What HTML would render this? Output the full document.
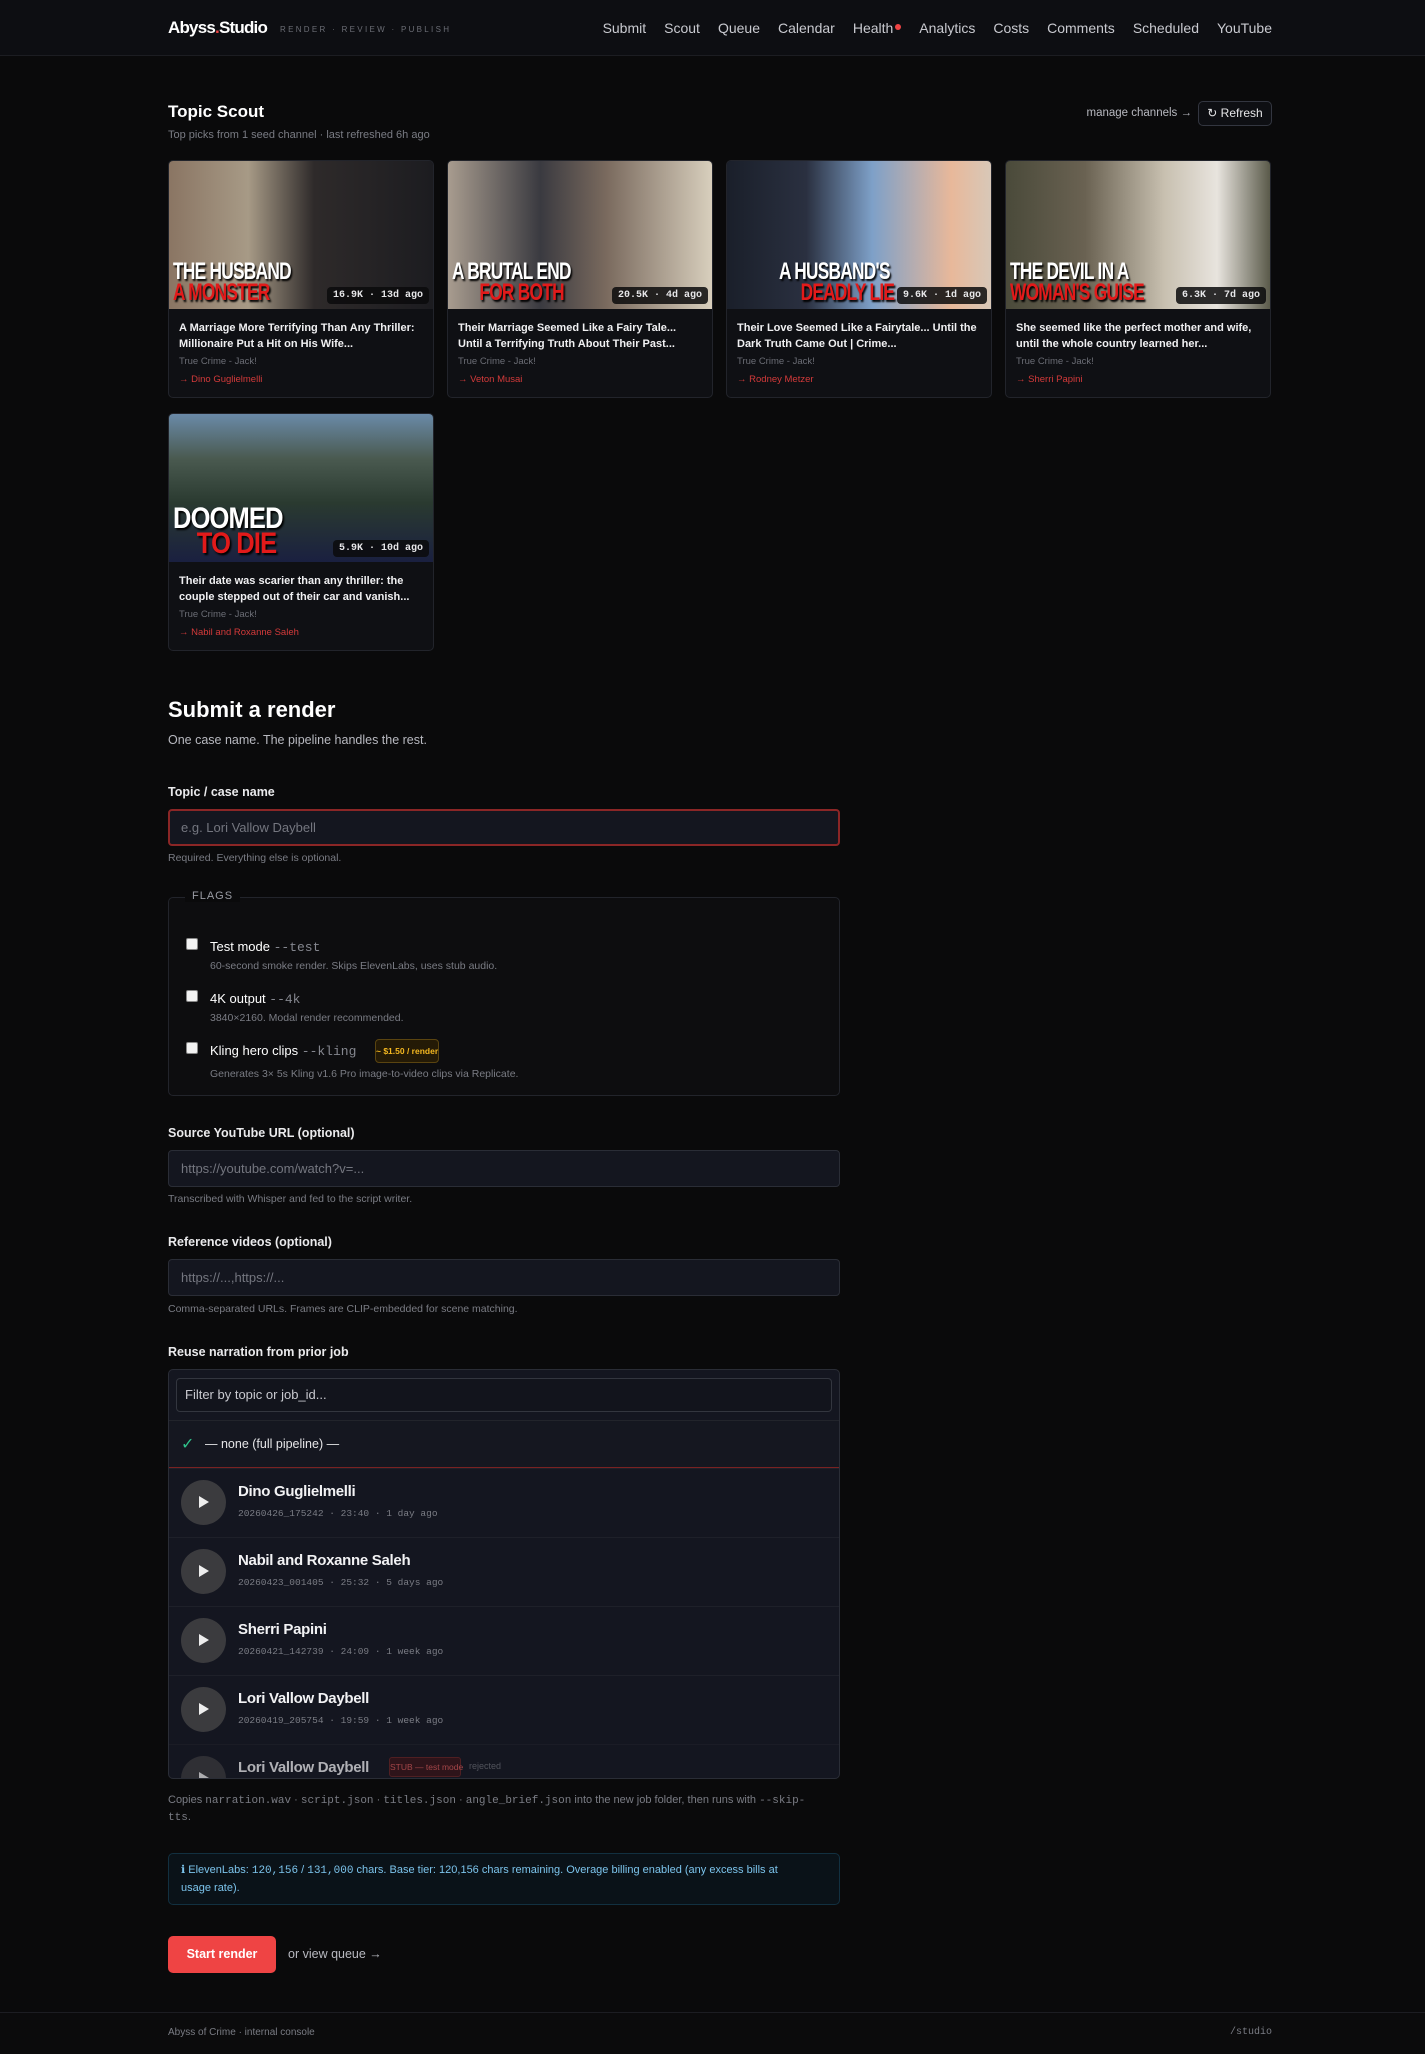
<!DOCTYPE html>
<html><head><meta charset="utf-8"><style>
*{box-sizing:border-box;margin:0;padding:0}
body{width:1425px;height:2054px;background:#0a0a0b;color:#e6e6e8;font-family:"Liberation Sans",sans-serif;position:relative;overflow:hidden}
.nav{height:56px;background:#0d0e12;border-bottom:1px solid #1c1d22;position:relative}
.logo{position:absolute;left:168px;top:18px;font-size:17px;font-weight:bold;color:#fff;letter-spacing:-0.8px}
.logo span{color:#ef4444}
.tag{position:absolute;left:280px;top:25px;font-size:8px;letter-spacing:2.3px;color:#6b6d75}
.links{position:absolute;right:153px;top:20px;font-size:14px;color:#c9cad0;white-space:nowrap}
.links a{margin-left:18px;color:#c9cad0;text-decoration:none}
.dot{display:inline-block;width:6px;height:6px;border-radius:3px;background:#ef4444;vertical-align:top;margin-top:4px;margin-left:2px}
.h2{position:absolute;left:168px;top:102px;font-size:17px;font-weight:bold;color:#fff}
.sub{position:absolute;left:168px;top:129px;font-size:11px;color:#7a7c84}
.mc{position:absolute;right:233px;top:107px;font-size:11.5px;color:#b8b9c0}
.ref{position:absolute;left:1198px;top:101px;width:74px;height:25px;border:1px solid #333640;border-radius:5px;background:#0e0f13;font-size:12px;color:#e6e6e8;text-align:center;line-height:23px}
.card{position:absolute;width:266px;height:238px;background:#0f1014;border:1px solid #22242b;border-radius:5px;overflow:hidden}
.thumb{height:148px;position:relative}
.ov{position:absolute;left:4px;bottom:6px;font-family:"Liberation Sans Narrow","Liberation Sans",sans-serif;font-weight:bold;font-size:24px;line-height:21px;color:#fff;text-shadow:2px 2px 2px #000;letter-spacing:-1px;transform:scaleX(.72);transform-origin:left bottom;white-space:nowrap}
.ov b{color:#e21a1a;display:block}
.st{position:absolute;right:4px;bottom:5px;background:rgba(10,10,12,.85);border-radius:4px;font-family:"Liberation Mono",monospace;font-size:10px;font-weight:bold;color:#e6e6e8;padding:3px 6px}
.ct{padding:11px 10px 0;font-size:11px;font-weight:bold;line-height:16px;color:#f0f0f2;height:43px;overflow:hidden}
.cc{padding:4px 10px 0;font-size:9.5px;color:#6b6d75}
.ca{padding:7px 10px 0;font-size:9.5px;color:#d33a3a}
.abs{position:absolute}
.lbl{position:absolute;left:168px;font-size:12.5px;font-weight:bold;color:#eaeaec}
.inp{position:absolute;left:168px;width:672px;height:37px;background:#14161f;border:1px solid #2a2d36;border-radius:4px;font-size:13px;color:#74767f;padding-left:12px;line-height:35px}
.help{position:absolute;left:168px;font-size:10.5px;color:#7a7c84}
.mono{font-family:"Liberation Mono",monospace}
.fs{position:absolute;left:168px;top:897px;width:672px;height:199px;border:1px solid #22242b;border-radius:5px;background:#0d0d0f}
.fl{position:absolute;left:16px;top:-8px;background:#0a0a0b;padding:0 7px;font-size:11px;letter-spacing:1px;color:#9a9ca4}
.cb{position:absolute;left:17px;width:12px;height:12px;background:#f2f2f2;border-radius:2px;border:1px solid #888}
.ft{position:absolute;left:41px;font-size:13px;color:#fff;white-space:nowrap}
.ft .mono{color:#85878f;font-size:13px}
.fd{position:absolute;left:41px;font-size:10.5px;color:#7a7c84}
.list{position:absolute;left:168px;top:1369px;width:672px;height:410px;background:#141620;border:1px solid #2a2d36;border-radius:5px;overflow:hidden}
.row{position:absolute;left:0;width:672px;height:68px;border-top:1px solid #1e2029}
.play{position:absolute;left:12px;top:11px;width:45px;height:45px;border-radius:50%;background:#3b3b3e}
.play:after{content:"";position:absolute;left:18px;top:16px;border-left:10px solid #eee;border-top:6px solid transparent;border-bottom:6px solid transparent}
.rn{position:absolute;left:69px;top:14px;font-size:15px;font-weight:bold;color:#f2f2f4;letter-spacing:-0.3px}
.rm{position:absolute;left:69px;top:39px;font-family:"Liberation Mono",monospace;font-size:9.5px;color:#7a7c84}
</style></head><body>
<div class="nav">
<div class="logo">Abyss<span>.</span>Studio</div>
<div class="tag">RENDER · REVIEW · PUBLISH</div>
<div class="links"><a>Submit</a><a>Scout</a><a>Queue</a><a>Calendar</a><a>Health<span class="dot"></span></a><a>Analytics</a><a>Costs</a><a>Comments</a><a>Scheduled</a><a>YouTube</a></div>
</div>
<div class="h2">Topic Scout</div>
<div class="sub">Top picks from 1 seed channel · last refreshed 6h ago</div>
<div class="mc">manage channels →</div>
<div class="ref">↻ Refresh</div>

<div class="card" style="left:168px;top:160px"><div class="thumb" style="background:linear-gradient(90deg,#8a7563 0%,#a79a86 30%,#2e2a2a 55%,#1c1c20 100%)"><div class="ov">THE HUSBAND<b>A MONSTER</b></div><div class="st">16.9K · 13d ago</div></div><div class="ct">A Marriage More Terrifying Than Any Thriller: Millionaire Put a Hit on His Wife...</div><div class="cc">True Crime - Jack!</div><div class="ca">→ Dino Guglielmelli</div></div>
<div class="card" style="left:447px;top:160px"><div class="thumb" style="background:linear-gradient(90deg,#a89c8f 0%,#3a3a40 35%,#7a6a5e 60%,#d8cfbd 100%)"><div class="ov">A BRUTAL END<b style="padding-left:38px">FOR BOTH</b></div><div class="st">20.5K · 4d ago</div></div><div class="ct">Their Marriage Seemed Like a Fairy Tale... Until a Terrifying Truth About Their Past...</div><div class="cc">True Crime - Jack!</div><div class="ca">→ Veton Musai</div></div>
<div class="card" style="left:726px;top:160px"><div class="thumb" style="background:linear-gradient(90deg,#1a1f2a 0%,#2a3040 30%,#7ea0c8 55%,#e8b89a 85%,#d8c8b8 100%)"><div class="ov" style="left:52px">A HUSBAND'S<b style="padding-left:30px">DEADLY LIE</b></div><div class="st">9.6K · 1d ago</div></div><div class="ct">Their Love Seemed Like a Fairytale... Until the Dark Truth Came Out | Crime...</div><div class="cc">True Crime - Jack!</div><div class="ca">→ Rodney Metzer</div></div>
<div class="card" style="left:1005px;top:160px"><div class="thumb" style="background:linear-gradient(90deg,#4a4a3a 0%,#6a6252 30%,#c8c0b0 60%,#e8e4de 80%,#5a5a4a 100%)"><div class="ov">THE DEVIL IN A<b>WOMAN'S GUISE</b></div><div class="st">6.3K · 7d ago</div></div><div class="ct">She seemed like the perfect mother and wife, until the whole country learned her...</div><div class="cc">True Crime - Jack!</div><div class="ca">→ Sherri Papini</div></div>
<div class="card" style="left:168px;top:413px"><div class="thumb" style="background:linear-gradient(180deg,#6a8aa8 0%,#4a5a50 30%,#2a3a30 60%,#1a2040 100%)"><div class="ov" style="font-size:30px;line-height:25px;transform:scaleX(.85)">DOOMED<b style="padding-left:28px">TO DIE</b></div><div class="st">5.9K · 10d ago</div></div><div class="ct">Their date was scarier than any thriller: the couple stepped out of their car and vanish...</div><div class="cc">True Crime - Jack!</div><div class="ca">→ Nabil and Roxanne Saleh</div></div>

<div class="abs" style="left:168px;top:697px;font-size:22px;font-weight:bold;color:#fff">Submit a render</div>
<div class="abs" style="left:168px;top:733px;font-size:12.5px;color:#b8b9c0">One case name. The pipeline handles the rest.</div>
<div class="lbl" style="top:785px">Topic / case name</div>
<div class="inp" style="top:809px;border:2px solid #8b2626;line-height:33px;padding-left:11px">e.g. Lori Vallow Daybell</div>
<div class="help" style="top:852px">Required. Everything else is optional.</div>
<div class="fs"><div class="fl">FLAGS</div>
<div class="cb" style="top:40px"></div><div class="ft" style="top:41px">Test mode <span class="mono">--test</span></div><div class="fd" style="top:62px">60-second smoke render. Skips ElevenLabs, uses stub audio.</div>
<div class="cb" style="top:92px"></div><div class="ft" style="top:93px">4K output <span class="mono">--4k</span></div><div class="fd" style="top:114px">3840×2160. Modal render recommended.</div>
<div class="cb" style="top:144px"></div><div class="ft" style="top:145px">Kling hero clips <span class="mono">--kling</span></div><div class="abs" style="left:206px;top:141px;width:64px;height:24px;border:1px solid #5a4410;background:#241a06;border-radius:4px;color:#f5b820;font-size:8.5px;font-weight:bold;text-align:center;line-height:22px;white-space:nowrap">~ $1.50 / render</div><div class="fd" style="top:170px">Generates 3× 5s Kling v1.6 Pro image-to-video clips via Replicate.</div>
</div>
<div class="lbl" style="top:1126px">Source YouTube URL (optional)</div>
<div class="inp" style="top:1150px">https://youtube.com/watch?v=...</div>
<div class="help" style="top:1193px">Transcribed with Whisper and fed to the script writer.</div>
<div class="lbl" style="top:1235px">Reference videos (optional)</div>
<div class="inp" style="top:1259px">https://...,https://...</div>
<div class="help" style="top:1303px">Comma-separated URLs. Frames are CLIP-embedded for scene matching.</div>
<div class="lbl" style="top:1345px">Reuse narration from prior job</div>
<div class="list">
<div class="abs" style="left:7px;top:8px;width:656px;height:34px;border:1px solid #33363f;border-radius:4px;background:#12141c;font-size:13px;color:#c9cad0;padding-left:8px;line-height:32px">Filter by topic or job_id...</div>
<div class="abs" style="left:0;top:50px;width:672px;height:48px;border-top:1px solid #22242b;border-bottom:1px solid #7a2222;background:#151720"><span class="abs" style="left:12px;top:13px;color:#2fc28a;font-size:16px">✓</span><span class="abs" style="left:36px;top:16px;font-size:12.5px;color:#e6e6e8">— none (full pipeline) —</span></div>
<div class="row" style="top:98px"><div class="play"></div><div class="rn">Dino Guglielmelli</div><div class="rm">20260426_175242 · 23:40 · 1 day ago</div></div>
<div class="row" style="top:167px"><div class="play"></div><div class="rn">Nabil and Roxanne Saleh</div><div class="rm">20260423_001405 · 25:32 · 5 days ago</div></div>
<div class="row" style="top:236px"><div class="play"></div><div class="rn">Sherri Papini</div><div class="rm">20260421_142739 · 24:09 · 1 week ago</div></div>
<div class="row" style="top:305px"><div class="play"></div><div class="rn">Lori Vallow Daybell</div><div class="rm">20260419_205754 · 19:59 · 1 week ago</div></div>
<div class="row" style="top:374px;opacity:.7"><div class="play"></div><div class="rn">Lori Vallow Daybell</div><div class="abs" style="left:220px;top:12px;width:72px;height:20px;border:1px solid #6a2424;background:#3a1418;border-radius:3px;color:#e05a5a;font-size:8.5px;text-align:center;line-height:18px;white-space:nowrap">STUB — test mode</div><div class="abs" style="left:300px;top:16px;font-size:9px;color:#6b6d75">rejected</div></div>
</div>
<div class="help" style="top:1792px;line-height:16px;width:640px;font-size:11px">Copies <span class="mono">narration.wav</span> · <span class="mono">script.json</span> · <span class="mono">titles.json</span> · <span class="mono">angle_brief.json</span> into the new job folder, then runs with <span class="mono">--skip-tts</span>.</div>
<div class="abs" style="left:168px;top:1853px;width:672px;height:52px;border:1px solid #123040;background:#0a1218;border-radius:5px;color:#7cc4ec;font-size:11px;line-height:17px;padding:8px 12px 8px 12px"><div style="width:620px">ℹ ElevenLabs: <span class="mono">120,156</span> / <span class="mono">131,000</span> chars. Base tier: 120,156 chars remaining. Overage billing enabled (any excess bills at usage rate).</div></div>
<div class="abs" style="left:168px;top:1936px;width:108px;height:37px;background:#ef4444;border-radius:5px;color:#fff;font-size:12.5px;font-weight:bold;text-align:center;line-height:37px">Start render</div>
<div class="abs" style="left:288px;top:1947px;font-size:12.5px;color:#b8b9c0">or view queue →</div>
<div class="abs" style="left:0;top:2012px;width:1425px;height:42px;border-top:1px solid #1c1d22;background:#0b0b0c"></div>
<div class="abs" style="left:168px;top:2027px;font-size:10px;color:#7a7c84">Abyss of Crime · internal console</div>
<div class="abs mono" style="left:1230px;top:2027px;font-size:10px;color:#7a7c84">/studio</div>
</body></html>
